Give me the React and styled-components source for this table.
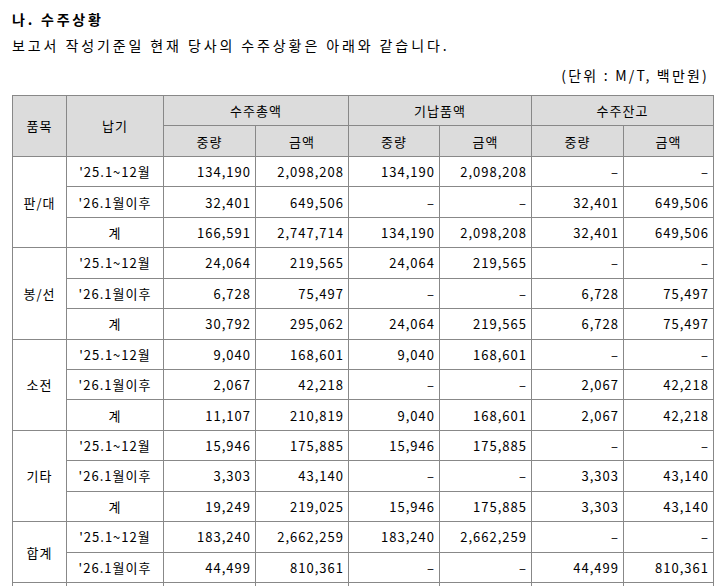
import React from "react";
import styled, { createGlobalStyle } from "styled-components";

const GlobalStyle = createGlobalStyle`
  html, body {
    margin: 0;
    padding: 0;
    background: #fff;
  }
  body {
    font-family: "Noto Sans CJK KR", "Noto Sans", sans-serif;
    color: #000;
  }
`;

const Page = styled.div`
  padding: 6px 4px 0 12px;
  width: 701px;
`;

const Title = styled.h3`
  margin: 0;
  font-size: 14px;
  font-weight: 700;
  line-height: 26px;
  letter-spacing: 2.8px;
`;

const Lead = styled.p`
  margin: 0;
  font-size: 14px;
  line-height: 26px;
  letter-spacing: 2.9px;
`;

const Unit = styled.div`
  margin: 4px 0 7px;
  text-align: right;
  font-size: 14px;
  line-height: 26px;
  letter-spacing: 2.2px;
  padding-right: 4px;
`;

const Table = styled.table`
  width: 701px;
  table-layout: fixed;
  border-collapse: collapse;
  border: 1px solid #000;
  font-size: 13px;
  letter-spacing: 1px;
`;

const Row = styled.tr`
  height: 30.45px;
`;

const HeadCell = styled.th`
  background: #dcdcdc;
  border: 1px solid #888;
  font-weight: 400;
  text-align: center;
  vertical-align: middle;
  padding: 0;
`;

const Cell = styled.td`
  border: 1px solid #888;
  padding: 0 ${(p) => (p.$align === "right" ? "4px" : "0")} 0 0;
  text-align: ${(p) => p.$align || "center"};
  vertical-align: middle;
  white-space: nowrap;
`;

const widths = [54, 97, 92, 93, 91, 92, 92, 90];

const groups = [
  {
    name: "판/대",
    rows: [
      ["'25.1~12월", "134,190", "2,098,208", "134,190", "2,098,208", "-", "-"],
      ["'26.1월이후", "32,401", "649,506", "-", "-", "32,401", "649,506"],
      ["계", "166,591", "2,747,714", "134,190", "2,098,208", "32,401", "649,506"],
    ],
  },
  {
    name: "봉/선",
    rows: [
      ["'25.1~12월", "24,064", "219,565", "24,064", "219,565", "-", "-"],
      ["'26.1월이후", "6,728", "75,497", "-", "-", "6,728", "75,497"],
      ["계", "30,792", "295,062", "24,064", "219,565", "6,728", "75,497"],
    ],
  },
  {
    name: "소전",
    rows: [
      ["'25.1~12월", "9,040", "168,601", "9,040", "168,601", "-", "-"],
      ["'26.1월이후", "2,067", "42,218", "-", "-", "2,067", "42,218"],
      ["계", "11,107", "210,819", "9,040", "168,601", "2,067", "42,218"],
    ],
  },
  {
    name: "기타",
    rows: [
      ["'25.1~12월", "15,946", "175,885", "15,946", "175,885", "-", "-"],
      ["'26.1월이후", "3,303", "43,140", "-", "-", "3,303", "43,140"],
      ["계", "19,249", "219,025", "15,946", "175,885", "3,303", "43,140"],
    ],
  },
  {
    name: "합계",
    rows: [
      ["'25.1~12월", "183,240", "2,662,259", "183,240", "2,662,259", "-", "-"],
      ["'26.1월이후", "44,499", "810,361", "-", "-", "44,499", "810,361"],
    ],
  },
];

const show = (v) => (v === "-" ? "–" : v);

export default function App() {
  return (
    <Page>
      <GlobalStyle />
      <Title>나. 수주상황</Title>
      <Lead>보고서 작성기준일 현재 당사의 수주상황은 아래와 같습니다.</Lead>
      <Unit>(단위 : M/T, 백만원)</Unit>
      <Table>
        <colgroup>
          {widths.map((w, i) => (
            <col key={i} style={{ width: w }} />
          ))}
        </colgroup>
        <thead>
          <Row>
            <HeadCell rowSpan={2}>품목</HeadCell>
            <HeadCell rowSpan={2}>납기</HeadCell>
            <HeadCell colSpan={2}>수주총액</HeadCell>
            <HeadCell colSpan={2}>기납품액</HeadCell>
            <HeadCell colSpan={2}>수주잔고</HeadCell>
          </Row>
          <Row>
            <HeadCell>중량</HeadCell>
            <HeadCell>금액</HeadCell>
            <HeadCell>중량</HeadCell>
            <HeadCell>금액</HeadCell>
            <HeadCell>중량</HeadCell>
            <HeadCell>금액</HeadCell>
          </Row>
        </thead>
        <tbody>
          {groups.map((g) =>
            g.rows.map((r, i) => (
              <Row key={g.name + i}>
                {i === 0 && <Cell rowSpan={g.rows.length}>{g.name}</Cell>}
                <Cell>{r[0]}</Cell>
                {r.slice(1).map((v, j) => (
                  <Cell key={j} $align="right">
                    {show(v)}
                  </Cell>
                ))}
              </Row>
            ))
          )}
          <Row>
            {widths.map((_, j) => (
              <Cell key={j} />
            ))}
          </Row>
        </tbody>
      </Table>
    </Page>
  );
}
